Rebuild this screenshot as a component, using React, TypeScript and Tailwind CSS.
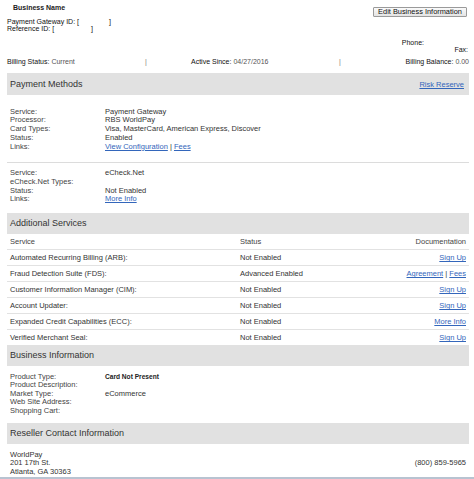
import React from "react";

const link = "text-[#3366bb] underline";

function Band({ title, right }: { title: string; right?: React.ReactNode }) {
  return (
    <div className="flex items-center justify-between bg-[#e1e1e1] pl-[3px] pr-[5px] h-[21px]">
      <span className="text-[9px] text-[#333]">{title}</span>
      {right}
    </div>
  );
}

function KV({ rows, lh }: { rows: [string, React.ReactNode][]; lh: string }) {
  return (
    <div className={`grid grid-cols-[95px_1fr] pl-[3px] text-[7.5px] ${lh}`}>
      {rows.map(([k, v], i) => (
        <React.Fragment key={i}>
          <div className="text-[#444] whitespace-nowrap">{k}</div>
          <div className="text-[#333] whitespace-nowrap">{v}</div>
        </React.Fragment>
      ))}
    </div>
  );
}

const services: [string, string, React.ReactNode][] = [
  ["Automated Recurring Billing (ARB):", "Not Enabled", <span className={link}>Sign Up</span>],
  [
    "Fraud Detection Suite (FDS):",
    "Advanced Enabled",
    <span>
      <span className={link}>Agreement</span> | <span className={link}>Fees</span>
    </span>,
  ],
  ["Customer Information Manager (CIM):", "Not Enabled", <span className={link}>Sign Up</span>],
  ["Account Updater:", "Not Enabled", <span className={link}>Sign Up</span>],
  ["Expanded Credit Capabilities (ECC):", "Not Enabled", <span className={link}>More Info</span>],
  ["Verified Merchant Seal:", "Not Enabled", <span className={link}>Sign Up</span>],
];

export default function App() {
  return (
    <div className="w-[474px] h-[479px] overflow-hidden bg-white text-[#333] flex flex-col font-['Liberation_Sans',Arial,sans-serif]">
      <div className="pl-[7px] pr-[5px]">
        {/* header */}
        <div className="flex justify-between items-start pt-[4px]">
          <div className="pl-[6px] text-[7px] font-bold leading-[8px] text-[#222] whitespace-nowrap">Business Name</div>
          <button className="mt-[3px] mr-[2px] h-[10px] w-[94px] flex items-center justify-center border border-[#9a9a9a] rounded-[1px] bg-gradient-to-b from-[#fafafa] to-[#e4e4e4] text-[7.4px] leading-[8px] text-[#111] whitespace-nowrap">
            Edit Business Information
          </button>
        </div>
        <div className="mt-[1px] text-[7px] leading-[7.4px] text-[#111] whitespace-nowrap">
          <div className="flex">
            <span>Payment Gateway ID: [</span>
            <span className="ml-[30px]">]</span>
          </div>
          <div className="flex">
            <span>Reference ID: [</span>
            <span className="ml-[37px]">]</span>
          </div>
        </div>
        <div className="mt-[6px] text-[7px] leading-[7px] text-[#111] whitespace-nowrap">
          <div className="flex justify-end pr-[45px]">Phone:</div>
          <div className="flex justify-end pr-[1px]">Fax:</div>
        </div>
        <div className="mt-[5px] flex text-[7px] leading-[7px] text-[#111] whitespace-nowrap">
          <div className="w-[138px] shrink-0">
            <span>Billing Status:</span> <span className="text-[#555]">Current</span>
          </div>
          <div className="w-[46px] shrink-0 text-[#777]">|</div>
          <div className="w-[148px] shrink-0">
            <span>Active Since:</span> <span className="text-[#555]">04/27/2016</span>
          </div>
          <div className="w-[66px] shrink-0 text-[#777]">|</div>
          <div className="ml-auto text-right">
            <span>Billing Balance:</span> <span className="text-[#555]">0.00</span>
          </div>
        </div>

        {/* Payment Methods */}
        <div className="mt-[8.5px]">
          <div className="flex items-center justify-between bg-[#e1e1e1] pl-[3px] pr-[5px] h-[22px]">
            <span className="text-[9px] text-[#333]">Payment Methods</span>
            <span className={`text-[7.5px] ${link}`}>Risk Reserve</span>
          </div>
        </div>
        <div className="pt-[12.4px] pb-[10.9px]">
          <KV
            lh="leading-[8.75px]"
            rows={[
              ["Service:", "Payment Gateway"],
              ["Processor:", "RBS WorldPay"],
              ["Card Types:", "Visa, MasterCard, American Express, Discover"],
              ["Status:", "Enabled"],
              [
                "Links:",
                <span>
                  <span className={link}>View Configuration</span> | <span className={link}>Fees</span>
                </span>,
              ],
            ]}
          />
        </div>
        <div className="h-px bg-[#dcdcdc]" />
        <div className="pt-[6px] pb-[9.6px]">
          <KV
            lh="leading-[8.6px]"
            rows={[
              ["Service:", "eCheck.Net"],
              ["eCheck.Net Types:", ""],
              ["Status:", "Not Enabled"],
              ["Links:", <span className={link}>More Info</span>],
            ]}
          />
        </div>

        {/* Additional services */}
        <Band title="Additional Services" />
        <div className="text-[7.5px] whitespace-nowrap">
          <div className="flex items-center h-[15px] pl-[3px] pr-[3px] text-[#444]">
            <div className="w-[230px]">Service</div>
            <div className="flex-1">Status</div>
            <div className="text-right">Documentation</div>
          </div>
          {services.map(([s, st, d], i) => (
            <div key={i} className="flex items-center h-[16px] border-t border-[#e2e2e2] pl-[3px] pr-[3px]">
              <div className="w-[230px] text-[#333]">{s}</div>
              <div className="flex-1 text-[#333]">{st}</div>
              <div className="text-right">{d}</div>
            </div>
          ))}
        </div>

        {/* Business Information */}
        <Band title="Business Information" />
        <div className="pt-[6.4px] pb-[7.6px]">
          <KV
            lh="leading-[8.6px]"
            rows={[
              ["Product Type:", <span className="font-bold text-[6.6px] text-[#222]">Card Not Present</span>],
              ["Product Description:", ""],
              ["Market Type:", "eCommerce"],
              ["Web Site Address:", ""],
              ["Shopping Cart:", ""],
            ]}
          />
        </div>

        {/* Reseller */}
        <Band title="Reseller Contact Information" />
        <div className="flex items-center justify-between pt-[6.5px] pl-[3px] pr-[3px] text-[7.5px] leading-[8.4px] whitespace-nowrap">
          <div className="text-[#333]">
            <div>WorldPay</div>
            <div>201 17th St.</div>
            <div>Atlanta, GA 30363</div>
          </div>
          <div className="text-[#333]">(800) 859-5965</div>
        </div>
      </div>
      <div className="flex-1" />
      <div className="h-[2px] shrink-0 bg-[#b8c3d1]" />
    </div>
  );
}
